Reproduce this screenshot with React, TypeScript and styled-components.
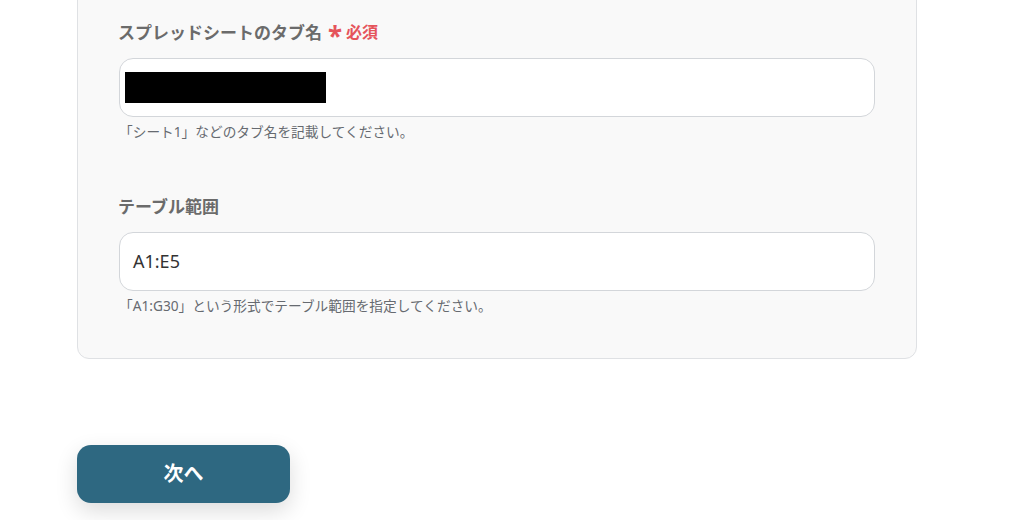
import React from 'react'
import styled, { createGlobalStyle } from 'styled-components'

const GlobalStyle = createGlobalStyle`
  html, body {
    margin: 0;
    padding: 0;
    background: #ffffff;
    font-family: "Noto Sans", "Noto Sans CJK JP", sans-serif;
  }
  body {
    width: 1014px;
    height: 520px;
    overflow: hidden;
  }
`

const Page = styled.div`
  display: flex;
  flex-direction: column;
  align-items: flex-start;
  padding-left: 77px;
  margin-top: -21px;
`

const Card = styled.section`
  box-sizing: border-box;
  width: 840px;
  padding: 39px 41px 42px;
  background: #f9f9f9;
  border: 1px solid #dfe1e4;
  border-radius: 12px;
  display: flex;
  flex-direction: column;
  gap: 51px;
`

const Field = styled.div`
  display: flex;
  flex-direction: column;
`

const Label = styled.label`
  display: flex;
  align-items: center;
  gap: 6px;
  height: 24px;
  margin-left: -1px;
  font-size: 17px;
  font-weight: 700;
  color: #6b6b6b;
  margin-bottom: 15px;
`

const Required = styled.span`
  display: inline-flex;
  align-items: center;
  gap: 4px;
  font-size: 16px;
  font-weight: 700;
  color: #e5545b;
`

const Star = styled.span`
  font-size: 26px;
  line-height: 1;
  margin-top: 10px;
`

const Input = styled.div`
  box-sizing: border-box;
  height: 59px;
  background: #ffffff;
  border: 1px solid #d3d6da;
  border-radius: 14px;
  display: flex;
  align-items: center;
  padding: 0 14px 0 5px;
  font-size: 18px;
  color: #333333;
`

const InputText = styled.span`
  padding-left: 8px;
  margin-top: -2px;
`

const Redacted = styled.div`
  width: 201px;
  height: 31px;
  background: #000000;
`

const Help = styled.p`
  margin: 5px 0 0;
  font-size: 13.7px;
  line-height: 20px;
  color: #666a70;
`

const NextButton = styled.button`
  margin-top: 86px;
  width: 213px;
  height: 58px;
  padding: 0 0 4px;
  border: none;
  border-radius: 14px;
  background: #2e6881;
  color: #ffffff;
  font-family: "Noto Sans", "Noto Sans CJK JP", sans-serif;
  font-size: 20px;
  font-weight: 700;
  box-shadow: 0 8px 22px rgba(0, 0, 0, 0.14);
  cursor: pointer;
`

export default function App() {
  return (
    <>
      <GlobalStyle />
      <Page>
        <Card>
          <Field>
            <Label>
              スプレッドシートのタブ名
              <Required>
                <Star>*</Star>必須
              </Required>
            </Label>
            <Input>
              <Redacted />
            </Input>
            <Help>「シート1」などのタブ名を記載してください。</Help>
          </Field>
          <Field>
            <Label>テーブル範囲</Label>
            <Input>
              <InputText>A1:E5</InputText>
            </Input>
            <Help>「A1:G30」という形式でテーブル範囲を指定してください。</Help>
          </Field>
        </Card>
        <NextButton>次へ</NextButton>
      </Page>
    </>
  )
}
